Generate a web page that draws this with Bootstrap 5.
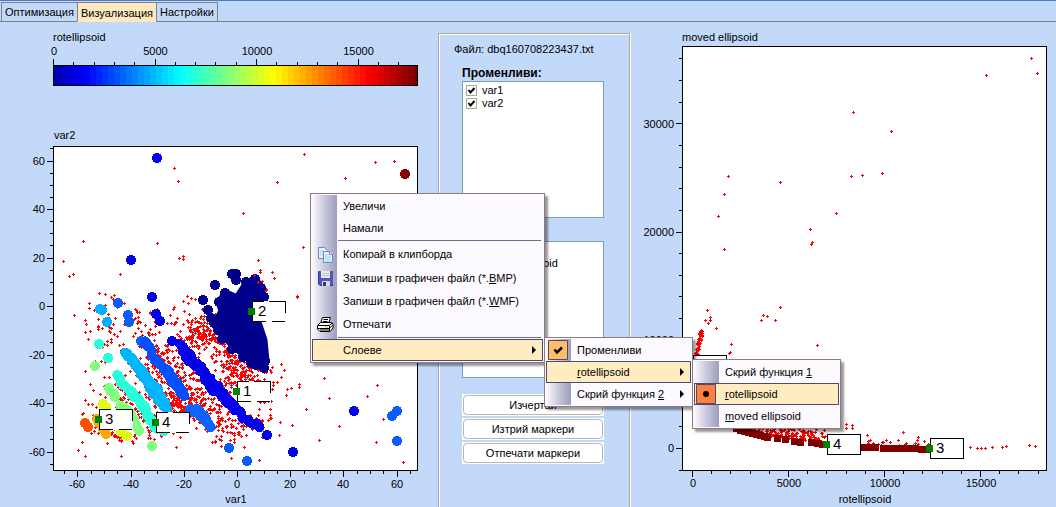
<!DOCTYPE html>
<html lang="bg">
<head>
<meta charset="utf-8">
<meta name="viewport" content="width=device-width, initial-scale=1">
<title>Визуализация</title>
<link rel="stylesheet" href="https://cdn.jsdelivr.net/npm/bootstrap@5.3.0/dist/css/bootstrap.min.css">
<style>
body { background: #c3d9fa; color: #000; font: 11px/14px "Liberation Sans", Arial, sans-serif; }
.tabbar { height: 22px; border-top: 1px solid #4e7ac7; box-shadow: inset 0 -1px #808080; padding: 1px 0 0 1px; }
.tabbar .nav-link { height: 20px; padding: 0 3px; border: 1px solid #808080; border-radius: 0; color: #000; font-size: 11px; line-height: 18px; margin-right: -1px; background: #c3d9fa; white-space: nowrap; }
.tabbar .nav-link.active { background: #ffe8c0; border-bottom-color: #ffe8c0; line-height: 21px; }
.workspace { grid-template-columns: 438fr 193fr 425fr; }
.workspace svg.plot { display: block; width: 100%; height: auto; }
.plot text { font: 11px "Liberation Sans", Arial, sans-serif; fill: #000; }
.plot text.marker-no { font-size: 15px; }
.side-panel { margin: 11px 0 0; border: 1px solid #aca899; border-bottom: 0; box-shadow: inset 1px 1px #fff, 1px 0 #fff; padding: 8px 25px 0 23px; margin-right: 1px; }
.file-name { margin: 0 0 2px -8px; white-space: nowrap; }
.caption-line { font-weight: bold; font-size: 12px; line-height: 14px; padding-top: 8px; height: 23px; }
.check-box-list { height: 137px; background: #fff; border: 1px solid #7f9db9; padding: 2px 3px; }
.check-box-list label { height: 13px; line-height: 13px; gap: 5px; }
.check-box-list input { appearance: none; width: 11px; height: 11px; margin: 0; border: 1px solid #aca899; background: #fff; }
.check-box-list input:checked { background: #fff url("data:image/svg+xml,%3Csvg xmlns='http://www.w3.org/2000/svg' viewBox='0 0 9 9'%3E%3Cpath d='M1.5 4L3.5 6.5L7.5 2' fill='none' stroke='black' stroke-width='2'/%3E%3C/svg%3E") center / 9px no-repeat; }
.panel-actions { row-gap: 2px; }
.flat-btn { height: 22px; background: #fff; border: 0; border-radius: 0; padding: 1px; font-size: 11px; line-height: 18px; color: #000; }
.flat-btn span { display: block; height: 20px; border: 1px solid #b8b8b8; border-radius: 4px; }
.popup { position: absolute; background: #fcfaff; border: 1px solid #94797c; border-radius: 0; box-shadow: 3px 3px 2px rgba(0,0,0,.4); padding: 1px; margin: 0; list-style: none; font-size: 11px; color: #000; z-index: 5; }
.popup::before { content: ""; position: absolute; left: 1px; top: 1px; bottom: 1px; width: 25px; background: linear-gradient(90deg, #fcfaff, #c8c8dc 50%, #9d9dbd); }
.popup > li { position: relative; }
.popup button { position: relative; display: flex; align-items: center; width: 100%; height: 22px; padding: 0 6px 0 30px; border: 1px solid transparent; background: none; text-align: left; color: #000; white-space: nowrap; line-height: 16px; }
.popup .tall > button { height: 24px; }
.popup .chosen > button { background: #ffecc0; border-color: #4b4b6f; }
.popup .rule { height: 3px; padding: 1px 2px 1px 26px; }
.popup .rule hr { margin: 0; border: 0; height: 1px; background: #6e6d8f; opacity: 1; }
.popup button > svg { position: absolute; left: 4px; top: 3px; width: 17px; height: 17px; }
.popup button > svg.state { left: 1px; top: 0; width: 20px; height: 20px; }
.popup .arrow { margin-left: auto; width: 0; height: 0; border: 4px solid transparent; border-left-color: #000; border-right: 0; }
.menu-root { left: 310px; top: 193px; width: 235px; }
.popup .popup { left: calc(100% + 1px); top: -2px; }
.menu-layers { width: 149px; }
.menu-function { width: 149px; }
</style>
</head>
<body class="min-vh-100 d-flex flex-column position-relative overflow-hidden">
<nav class="tabbar nav flex-nowrap">
  <a class="nav-link" href="#">Оптимизация</a>
  <a class="nav-link active" href="#" aria-current="page">Визуализация</a>
  <a class="nav-link" href="#">Настройки</a>
</nav>
<main class="workspace d-grid flex-grow-1">
  <section><svg class="plot" id="varsPlot" viewBox="0 22 438 485" role="img" aria-label="var1 / var2"></svg></section>
  <section class="side-panel">
    <div class="file-name">Файл: dbq160708223437.txt</div>
    <div class="caption-line">Променливи:</div>
    <div class="check-box-list">
      <label class="d-flex align-items-center"><input type="checkbox" checked>var1</label>
      <label class="d-flex align-items-center"><input type="checkbox" checked>var2</label>
    </div>
    <div class="caption-line">Функции:</div>
    <div class="check-box-list">
      <label class="d-flex align-items-center"><input type="checkbox" checked>rotellipsoid</label>
      <label class="d-flex align-items-center"><input type="checkbox" checked>moved ellipsoid</label>
    </div>
    <div class="panel-actions d-grid mt-3">
      <button class="flat-btn" type="button"><span>Изчертай</span></button>
      <button class="flat-btn" type="button"><span>Изтрий маркери</span></button>
      <button class="flat-btn" type="button"><span>Отпечати маркери</span></button>
    </div>
  </section>
  <section><svg class="plot" id="functionsPlot" viewBox="631 22 425 485" role="img" aria-label="rotellipsoid / moved ellipsoid"></svg></section>
</main>

<ul class="popup menu-root">
  <li><button type="button">Увеличи</button></li>
  <li><button type="button">Намали</button></li>
  <li class="rule"><hr></li>
  <li class="tall"><button type="button">
    <svg viewBox="0 0 17 17"><path d="M1.500 1.500h6l3 3v8h-9z" fill="#e4f2ff" stroke="#7186bd"/><path d="M3 5h4M3 7h4M3 9h4" stroke="#a9d3f8"/><path d="M6.500 5.500h6l3 3v8h-9z" fill="#e4f2ff" stroke="#7186bd"/><path d="M12.500 5.500v3h3" fill="#fff" stroke="#7186bd"/><path d="M8 9h4M8 11h6M8 13h6M8 15h6" stroke="#9ccdf8"/></svg>Копирай в клипборда</button></li>
  <li class="tall"><button type="button">
    <svg viewBox="0 0 17 17"><path d="M1 1h15v15H3l-2-2z" fill="#5355bd"/><path d="M1.500 2v11.500l2 2H16" fill="none" stroke="#34358f"/><path d="M4 1h9v7H4z" fill="#e9eceb"/><path d="M5 3.500h7M5 5.500h7" stroke="#bcc6c4"/><path d="M5 11h8v5H5z" fill="#d6d8ef"/><path d="M6 12h3v4H6z" fill="#34358f"/></svg><span>Запиши в графичен файл (*.<u>B</u>MP)</span></button></li>
  <li><button type="button"><span>Запиши в графичен файл (*.<u>W</u>MF)</span></button></li>
  <li class="tall"><button type="button">
    <svg viewBox="0 0 17 17"><path d="M5.500 1.500h8l-2 6h-8z" fill="#fff" stroke="#000"/><path d="M6.500 3.500h4.500M6 5.500h4.500" stroke="#000"/><path d="M.5 9.500l3-3h10.500l2 1.500v4l-3 3.500h-10l-2.500-2.500z" fill="#fff" stroke="#000"/><path d="M1 9.500h11l3.500-2.500M1 12.500h11l3.500-3M12.500 10v5" fill="none" stroke="#000"/><path d="M3 14h9" stroke="#000"/><path d="M8 11h3" stroke="#e8e000" stroke-width="1.500"/></svg>Отпечати</button></li>
  <li class="rule"><hr></li>
  <li class="chosen"><button type="button">Слоеве<span class="arrow"></span></button>
    <ul class="popup menu-layers">
      <li><button type="button"><svg class="state" viewBox="0 0 20 20"><path d="M.5.500h19v19H.5z" fill="#ffbd69" stroke="#4b4b6f"/><path d="M6.500 9.500l2.500 3 5-5" fill="none" stroke="#000" stroke-width="2.500"/></svg>Променливи</button></li>
      <li class="chosen"><button type="button"><span><u>r</u>otellipsoid</span><span class="arrow"></span></button>
        <ul class="popup menu-function">
          <li><button type="button"><span>Скрий функция <u>1</u></span></button></li>
          <li class="chosen"><button type="button"><svg class="state" viewBox="0 0 20 20"><path d="M.5.500h19v19H.5z" fill="#ff7f3e" stroke="#4b4b6f"/><circle cx="10" cy="10" r="3"/></svg><span><u>r</u>otellipsoid</span></button></li>
          <li><button type="button"><span><u>m</u>oved ellipsoid</span></button></li>
        </ul>
      </li>
      <li><button type="button"><span>Скрий функция <u>2</u></span><span class="arrow"></span></button></li>
    </ul>
  </li>
</ul>

<script src="https://cdn.jsdelivr.net/npm/bootstrap@5.3.0/dist/js/bootstrap.bundle.min.js"></script>
<script>
const NS = 'http://www.w3.org/2000/svg';
let seed = 41;
const rnd = () => (seed = (seed * 16807) % 2147483647) / 2147483647;
const add = (svg, tag, attrs, text) => {
  const e = document.createElementNS(NS, tag);
  for (const k in attrs) e.setAttribute(k, attrs[k]);
  if (text !== undefined) e.textContent = text;
  svg.append(e);
  return e;
};
const label = (svg, x, y, t, anchor = 'middle') => add(svg, 'text', { x, y, 'text-anchor': anchor }, t);
const lines = (svg, d) => add(svg, 'path', { d, stroke: '#000', fill: 'none', 'shape-rendering': 'crispEdges' });
const crosses = (svg, pts) => add(svg, 'path', {
  d: pts.map(([x, y]) => `M${Math.round(x) - 1} ${Math.round(y)}.5h3M${Math.round(x)}.5 ${Math.round(y) - 1}v3`).join(''),
  stroke: '#f00', 'shape-rendering': 'crispEdges' });
const dots = (svg, fill, pts) => pts.forEach(([x, y]) => add(svg, 'circle', { cx: x, cy: y, r: 5, fill, 'shape-rendering': 'crispEdges' }));
// circles strung along a polyline
const chain = (svg, fill, pts) => {
  for (let i = 1; i < pts.length; i++) {
    const [a, b] = pts[i - 1], [c, d] = pts[i], n = Math.ceil(Math.hypot(c - a, d - b) / 3);
    for (let k = 0; k <= n; k++) dots(svg, fill, [[a + (c - a) * k / n + rnd() * 3 - 1, b + (d - b) * k / n + rnd() * 3 - 2]]);
  }
};
const frame = (svg, x, y, w, h) => add(svg, 'rect', { x: x + .5, y: y + .5, width: w, height: h, fill: '#fff', stroke: '#000', 'shape-rendering': 'crispEdges' });
const marker = (svg, x, y, t, gaps) => {
  add(svg, 'rect', { x, y: y - 10, width: 34, height: 21, fill: '#fff' });
  add(svg, 'rect', { x: x + .5, y: y - 9.5, width: 33, height: 20, fill: 'none', stroke: '#000', 'stroke-dasharray': gaps ? '11 5 28 10 13 6 12 0 23 0' : 'none', 'shape-rendering': 'crispEdges' });
  add(svg, 'rect', { x: x - 4, y: y - 3, width: 7, height: 7, fill: '#008000' });
  add(svg, 'text', { x: x + 6, y: y + 5, class: 'marker-no' }, t);
};

/* var1 / var2 */
const L = document.getElementById('varsPlot');
label(L, 53, 41, 'rotellipsoid', 'start');
const jet = v => [3, 2, 1].map(c => Math.round(255 * Math.max(0, Math.min(1, 1.5 - Math.abs(v - c))))).join();
for (let i = 0; i < 61; i++) add(L, 'rect', { x: 54 + i * 6, y: 66, width: Math.min(6, 417 - 54 - i * 6), height: 19, fill: `rgb(${jet((i * 6 + 54 + 3 - 39) / 94)})` });
let d = 'M53.500 65.500h364v20h-364z';
for (let i = 0; i < 18; i++) d += `M${Math.round(53 + i * 20.3)}.5 65v${i % 5 ? -3 : -6}`;
lines(L, d);
[0, 5000, 10000, 15000].forEach((v, i) => label(L, 54 + i * 101.5, 55, v));
label(L, 54, 139, 'var2', 'start');
frame(L, 53, 146, 364, 324);
d = '';
for (let v = -65; v <= 65; v += 5) {
  d += `M53 ${Math.round(306 - v * 2.425)}.5h${v % 20 ? -3 : -6}`;
  if (v % 20 === 0) label(L, 45, Math.round(310 - v * 2.425), v, 'end');
}
for (let v = -65; v <= 65; v += 5) {
  d += `M${Math.round(237 + v * 2.66)}.5 471v${v % 20 ? 3 : 6}`;
  if (v % 20 === 0) label(L, Math.round(237 + v * 2.66), 488, v);
}
lines(L, d);
label(L, 236, 503, 'var1');

const field = [];
const near = (poly, n, sx, sy) => {
  for (let i = 0; i < n; i++) {
    const k = Math.floor(rnd() * (poly.length - 1)), t = rnd();
    field.push([poly[k][0] + (poly[k + 1][0] - poly[k][0]) * t + (rnd() + rnd() - 1) * sx,
                poly[k][1] + (poly[k + 1][1] - poly[k][1]) * t + (rnd() + rnd() - 1) * sy]);
  }
};
near([[200,325],[222,345],[238,365],[250,380]], 190, 22, 22);
near([[222,385],[232,370],[245,362]], 90, 16, 22);
near([[178,352],[198,335],[205,325]], 100, 16, 18);
near([[150,350],[168,368],[185,385],[205,405]], 200, 17, 20);
near([[140,365],[155,385],[172,402],[185,412]], 210, 17, 18);
near([[112,378],[125,395],[140,412],[150,428]], 110, 22, 20);
near([[190,398],[215,415],[240,432]], 130, 22, 20);
near([[88,315],[108,322],[104,350]], 45, 22, 30);
near([[95,415],[110,430],[125,435]], 60, 18, 12);
near([[120,310],[160,330],[205,310]], 75, 30, 26);
near([[90,390],[130,430],[210,432],[275,425]], 60, 22, 22);
near([[240,355],[270,380],[258,405]], 45, 22, 22);
crosses(L, field);
crosses(L, [[304,154],[277,182],[243,213],[303,247],[258,260],[297,296],[174,168],[178,181],[157,243],[179,258],[183,256],[183,259],[83,241],[63,261],[69,276],[73,274],[120,274],[105,294],[111,297],[113,299],[187,296],[191,298],[195,299],[272,272],[274,278],[260,270],[266,289],[86,324],[85,371],[85,400],[78,450],[82,442],[85,456],[121,456],[287,389],[291,388],[299,384],[299,387],[284,370],[297,297],[279,435],[271,418],[231,458],[259,460],[375,162],[394,161],[345,178],[377,385],[395,444],[403,462],[306,409],[329,398],[339,426],[367,396],[376,442],[324,378],[383,419],[319,440]]);
dots(L, '#0000eb', [[157,158],[131,260],[152,297],[156,314],[160,321],[172,341],[267,435],[293,452],[354,411]]);
chain(L, '#0000eb', [[180,343],[185,357],[200,370],[210,387],[222,397],[232,408],[250,423],[260,427]]);
chain(L, '#0000eb', [[184,350],[202,371],[220,392],[236,410]]);
dots(L, '#0a5cff', [[118,303],[128,315],[129,322],[229,448],[247,461],[397,411],[392,416],[397,441],[141,341]]);
chain(L, '#0050ff', [[143,342],[148,347],[152,357],[157,363],[165,370],[173,383],[185,397]]);
chain(L, '#0050ff', [[168,370],[180,390]]);
chain(L, '#0a64ff', [[191,409],[202,417],[211,427]]);
chain(L, '#0a64ff', [[196,408],[206,420]]);
dots(L, '#00b0ff', [[102,310],[100,309],[107,322]]);
chain(L, '#00b0ff', [[125,353],[135,365],[143,378],[150,390],[160,403],[167,409]]);
chain(L, '#00b8ff', [[128,356],[142,372],[155,388],[166,406]]);
dots(L, '#26ffdc', [[99,344],[108,358]]);
chain(L, '#26ffdc', [[117,375],[123,385],[132,395],[143,407],[148,415],[153,425],[162,431]]);
dots(L, '#80ff80', [[95,366],[109,388],[110,391],[114,394],[115,397],[152,446]]);
chain(L, '#80ff80', [[119,406],[127,411],[135,423],[140,431]]);
dots(L, '#e1fa14', [[103,404],[106,407],[121,432],[127,436]]);
dots(L, '#ffa800', [[97,419],[99,423],[103,429],[106,434]]);
dots(L, '#ff5000', [[85,423],[88,427]]);
dots(L, '#8b0000', [[405,174]]);
add(L, 'path', { d: 'M226 293L237 298L246 284L254 279L259 284L264 298L258 322L264 340L266 361L261 364L250 359L233 346L222 334L216 322L222 311L219 302Z', fill: '#00008c', stroke: '#00008c', 'stroke-width': 7, 'stroke-linejoin': 'round' });
dots(L, '#00008c', [[232,274],[236,274],[236,280],[215,285],[203,300],[208,310],[211,318],[225,293],[219,302],[246,282],[255,279],[261,288],[264,297],[262,340],[265,361],[264,368],[262,350],[214,323],[218,330],[222,339],[232,349],[243,357],[251,363],[256,365]]);
crosses(L, [[254,275],[258,282],[262,281],[260,272],[266,290]]);
marker(L, 252, 311, '2', true);
marker(L, 237, 391, '1', true);
marker(L, 99, 419, '3', true);
marker(L, 156, 422, '4', true);

/* rotellipsoid / moved ellipsoid */
const R = document.getElementById('functionsPlot');
label(R, 682, 41, 'moved ellipsoid', 'start');
frame(R, 682, 46, 364, 424);
d = '';
for (let v = 0; v <= 18; v++) {
  d += `M682 ${Math.round(448 - v * 21.65)}.5h${v % 5 ? -3 : -6}`;
  if (v % 5 === 0) label(R, 674, Math.round(452 - v * 21.6), v * 2000, 'end');
  d += `M${Math.round(692 + v * 19.2)}.5 471v${v % 5 ? 3 : 6}`;
  if (v % 5 === 0) label(R, 693 + v * 19.2, 487, v * 1000);
}
d += 'M682 470.500h-3';
lines(R, d);
label(R, 865, 503, 'rotellipsoid');
const tail = [[728,176],[724,194],[718,216],[724,249],[780,182],[836,213],[810,229],[811,244],[812,242],[853,112],[851,176],[891,131],[862,175],[882,173],[986,75],[1031,58],[1037,73],[707,310],[710,317],[710,320],[705,320],[708,323],[716,328],[731,344],[730,352],[729,353],[780,307],[763,315],[767,316],[761,320],[775,320],[817,345],[846,424],[846,428],[852,425],[852,428],[867,435],[865,447],[905,444],[948,445],[970,447],[977,448],[981,448],[985,448],[992,447],[1002,447],[1006,446],[1029,445],[1035,446],[903,432],[918,437],[890,442],[873,443],[955,448]];
for (let i = 0; i < 70; i++) { const t = rnd(); tail.push([694 + t * 6 + rnd() * 3, 356 - t * 28 + rnd() * 4]); }
for (let i = 0; i < 230; i++) { const t = rnd(); tail.push([740 + t * 85, 432 + t * 11 - rnd() * rnd() * 22]); }
for (let i = 0; i < 55; i++) { const t = rnd(); tail.push([860 + t * 75, 449 - rnd() * rnd() * 10]); }
crosses(R, tail);
[[736,428],[740,430],[744,431],[748,432],[752,433],[756,434],[760,435],[764,436],[767,437],[777,438],[785,439],[794,441],[800,442],[811,442],[817,443],[822,444],[863,447],[869,447],[875,447],[883,448],[889,448],[896,448],[902,448],[909,448],[914,448],[921,449],[926,449]].forEach(([x, y]) =>
  add(R, 'rect', { x: x - 3, y: y - 3, width: 7, height: 7, fill: '#800000' }));
marker(R, 693, 365, '1', false);
marker(R, 827, 444, '4', false);
marker(R, 930, 448, '3', false);
</script>
</body>
</html>
